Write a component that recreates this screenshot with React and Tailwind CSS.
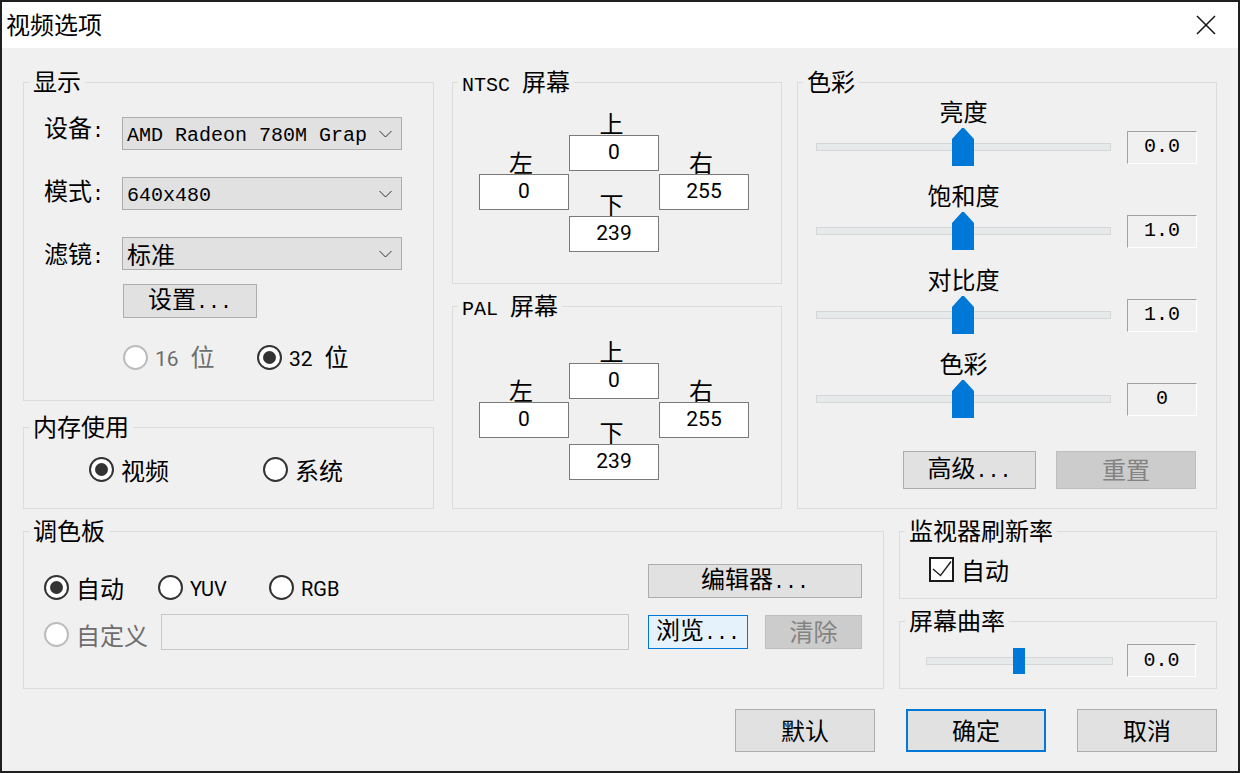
import React from "react";

const Mono = ({ children }) => (
  <span className="font-['Liberation_Mono'] text-[20px]">{children}</span>
);
const Num = ({ children }) => (
  <span className="font-['Roboto'] text-[21px]">{children}</span>
);

function Group({ title, className, children }) {
  return (
    <div className={"relative border border-[#dcdcdc] " + className}>
      <div className="absolute left-[5px] -top-[14px] h-[24px] leading-[24px] px-[4px] bg-[#f0f0f0] whitespace-nowrap">
        {title}
      </div>
      {children}
    </div>
  );
}

function Btn({ className, children }) {
  return (
    <div
      className={
        "flex items-center justify-center pb-[2px] leading-[24px] whitespace-nowrap " +
        className
      }
    >
      <span>{children}</span>
    </div>
  );
}

function Radio({ checked, disabled, children, className }) {
  return (
    <div className={"flex items-center h-[25px] " + (className || "")}>
      <span
        className={
          "w-[25px] h-[25px] shrink-0 rounded-full border-2 bg-white flex items-center justify-center " +
          (disabled ? "border-[#bcbcbc]" : "border-[#333333]")
        }
      >
        {checked && <span className="w-[13px] h-[13px] rounded-full bg-[#333333]" />}
      </span>
      <span
        className={
          "ml-[7px] leading-[24px] whitespace-nowrap " +
          (disabled ? "text-[#6d6d6d]" : "text-black")
        }
      >
        {children}
      </span>
    </div>
  );
}

function Chevron() {
  return (
    <svg width="13" height="8" viewBox="0 0 13 8">
      <path d="M0.5 1 L6.5 7 L12.5 1" fill="none" stroke="#333" strokeWidth="1" />
    </svg>
  );
}

function Combo({ children }) {
  return (
    <div className="w-[280px] h-[33px] border border-[#adadad] bg-[#e1e1e1] flex items-center justify-between pl-[4px] pr-[9px] leading-[24px] whitespace-nowrap">
      <span>{children}</span>
      <Chevron />
    </div>
  );
}

function EditBox({ children }) {
  return (
    <div className="w-[90px] h-[36px] border border-[#7a7a7a] bg-white flex items-center justify-center pb-[2px] font-['Roboto'] text-[21px] leading-[24px]">
      {children}
    </div>
  );
}

function ValueBox({ children, className }) {
  return (
    <div
      className={
        "h-[33px] border border-t-[#a0a0a0] border-l-[#a0a0a0] border-r-white border-b-white flex items-center justify-center font-['Liberation_Mono'] text-[20px] leading-[24px] " +
        className
      }
    >
      {children}
    </div>
  );
}

function Thumb() {
  return (
    <svg className="absolute left-[136px] top-0" width="22" height="38" viewBox="0 0 22 38">
      <polygon points="0,11 10,0 12,0 22,11 22,38 0,38" fill="#0078d7" />
    </svg>
  );
}

function ColorRow({ label, value, first }) {
  return (
    <div className={first ? "" : "mt-[17px]"}>
      <div className="ml-[18px] w-[295px] h-[24px] leading-[24px] text-center">{label}</div>
      <div className="flex items-center ml-[18px] mt-[5px]">
        <div className="relative w-[295px] h-[38px] flex items-center">
          <div className="w-full h-[8px] border border-[#d6d6d6] bg-[#e7eaea]" />
          <Thumb />
        </div>
        <ValueBox className="ml-[16px] w-[70px]">{value}</ValueBox>
      </div>
    </div>
  );
}

function Screen({ title, className, padTop }) {
  return (
    <Group title={title} className={className}>
      <div className={"flex pl-[26px] " + padTop}>
        <div className="flex flex-col w-[90px] mt-[39px]">
          <div className="h-[24px] leading-[24px] text-center pr-[6px]">左</div>
          <EditBox>0</EditBox>
        </div>
        <div className="flex flex-col w-[90px]">
          <div className="h-[24px] leading-[24px] text-center pr-[5px]">上</div>
          <EditBox>0</EditBox>
          <div className="mt-[20px] h-[25px] leading-[25px] text-center pr-[5px]">下</div>
          <EditBox>239</EditBox>
        </div>
        <div className="flex flex-col w-[90px] mt-[39px]">
          <div className="h-[24px] leading-[24px] text-center pr-[6px]">右</div>
          <EditBox>255</EditBox>
        </div>
      </div>
    </Group>
  );
}

export default function App() {
  return (
    <div className="w-[1240px] h-[773px] border-2 border-[#202020] bg-[#f0f0f0] flex flex-col font-['Noto_Sans_CJK_SC'] text-[24px] text-black overflow-hidden">
      {/* Title bar */}
      <div className="h-[46px] bg-white flex items-center justify-between pl-[4px] pr-[22px] shrink-0">
        <div className="leading-[24px] pb-[3px]">视频选项</div>
        <svg width="20" height="20" viewBox="0 0 20 20">
          <path d="M1 1 L19 19 M19 1 L1 19" stroke="#111" strokeWidth="1.5" fill="none" />
        </svg>
      </div>

      {/* Body */}
      <div className="flex flex-col pt-[34px] pl-[21px] pr-[21px]">
        {/* Row 1 */}
        <div className="flex h-[427px]">
          {/* Left column */}
          <div className="flex flex-col w-[411px]">
            <Group title="显示" className="h-[319px]">
              <div className="flex flex-col pt-[34px]">
                <div className="flex items-center h-[33px]">
                  <div className="w-[98px] pl-[20px] pb-[9px] leading-[24px] whitespace-nowrap">
                    设备<Mono>:</Mono>
                  </div>
                  <Combo>
                    <Mono>AMD Radeon 780M Grap</Mono>
                  </Combo>
                </div>
                <div className="flex items-center h-[33px] mt-[27px]">
                  <div className="w-[98px] pl-[20px] pb-[3px] leading-[24px] whitespace-nowrap">
                    模式<Mono>:</Mono>
                  </div>
                  <Combo>
                    <Mono>640x480</Mono>
                  </Combo>
                </div>
                <div className="flex items-center h-[33px] mt-[27px]">
                  <div className="w-[98px] pl-[20px] pt-[3px] leading-[24px] whitespace-nowrap">
                    滤镜<Mono>:</Mono>
                  </div>
                  <Combo>标准</Combo>
                </div>
                <Btn className="ml-[99px] mt-[14px] w-[134px] h-[34px] border border-[#adadad] bg-[#e1e1e1]">
                  设置<Mono>...</Mono>
                </Btn>
                <div className="flex items-center ml-[99px] mt-[27px]">
                  <Radio disabled className="w-[134px]">
                    <Num>16</Num>
                    <span className="ml-[12px]">位</span>
                  </Radio>
                  <Radio checked>
                    <Num>32</Num>
                    <span className="ml-[12px]">位</span>
                  </Radio>
                </div>
              </div>
            </Group>
            <Group title="内存使用" className="h-[82px] mt-[26px]">
              <div className="flex items-center ml-[65px] mt-[29px]">
                <Radio checked className="w-[174px]">视频</Radio>
                <Radio>系统</Radio>
              </div>
            </Group>
          </div>

          {/* Middle column */}
          <div className="flex flex-col w-[330px] ml-[18px]">
            <Screen
              title={
                <>
                  <Mono>NTSC </Mono>屏幕
                </>
              }
              className="h-[202px]"
              padTop="pt-[28px]"
            />
            <Screen
              title={
                <>
                  <Mono>PAL </Mono>屏幕
                </>
              }
              className="h-[203px] mt-[22px]"
              padTop="pt-[32px]"
            />
          </div>

          {/* Right column */}
          <Group title="色彩" className="w-[420px] h-[427px] ml-[15px]">
            <div className="flex flex-col pt-[16px]">
              <ColorRow first label="亮度" value="0.0" />
              <ColorRow label="饱和度" value="1.0" />
              <ColorRow label="对比度" value="1.0" />
              <ColorRow label="色彩" value="0" />
              <div className="flex ml-[105px] mt-[33px]">
                <Btn className="w-[133px] h-[38px] border border-[#adadad] bg-[#e1e1e1]">
                  高级<Mono>...</Mono>
                </Btn>
                <Btn className="ml-[20px] w-[140px] h-[38px] border border-[#bfbfbf] bg-[#cccccc] text-[#838383]">
                  重置
                </Btn>
              </div>
            </div>
          </Group>
        </div>

        {/* Row 2 */}
        <div className="flex h-[158px] mt-[22px]">
          <Group title="调色板" className="w-[861px] h-[158px]">
            <div className="flex">
              <div className="flex flex-col w-[605px] pl-[20px]">
                <div className="flex items-center mt-[43px]">
                  <Radio checked className="w-[114px]">自动</Radio>
                  <Radio className="w-[111px]">
                    <span className="font-['Roboto'] text-[20px]">YUV</span>
                  </Radio>
                  <Radio>
                    <span className="font-['Roboto'] text-[20px]">RGB</span>
                  </Radio>
                </div>
                <div className="flex items-start mt-[14px]">
                  <Radio disabled className="w-[117px] mt-[8px]">自定义</Radio>
                  <div className="w-[468px] h-[36px] border border-[#c8c8c8] bg-[#f0f0f0]" />
                </div>
              </div>
              <div className="flex flex-col ml-[19px] mt-[32px]">
                <Btn className="w-[214px] h-[34px] border border-[#adadad] bg-[#e1e1e1]">
                  编辑器<Mono>...</Mono>
                </Btn>
                <div className="flex mt-[17px]">
                  <Btn className="w-[100px] h-[34px] border border-[#0078d7] bg-[#e5f1fb]">
                    浏览<Mono>...</Mono>
                  </Btn>
                  <Btn className="ml-[17px] w-[97px] h-[34px] border border-[#bfbfbf] bg-[#cccccc] text-[#838383]">
                    清除
                  </Btn>
                </div>
              </div>
            </div>
          </Group>

          <div className="flex flex-col w-[318px] ml-[15px]">
            <Group title="监视器刷新率" className="h-[68px]">
              <div className="flex items-center ml-[29px] mt-[25px]">
                <div className="w-[25px] h-[25px] border-2 border-[#1a1a1a] bg-white">
                  <svg width="21" height="21" viewBox="0 0 21 21">
                    <path d="M2 10 L9.5 16.5 L20 2.5" fill="none" stroke="#222" strokeWidth="1.4" />
                  </svg>
                </div>
                <span className="ml-[7px] leading-[24px]">自动</span>
              </div>
            </Group>
            <Group title="屏幕曲率" className="h-[68px] mt-[22px]">
              <div className="flex items-center ml-[26px] mt-[22px] h-[33px]">
                <div className="relative w-[187px] h-[26px] flex items-center">
                  <div className="w-full h-[8px] border border-[#d6d6d6] bg-[#e7eaea]" />
                  <div className="absolute left-[87px] top-0 w-[12px] h-[26px] bg-[#0078d7]" />
                </div>
                <ValueBox className="ml-[14px] w-[69px]">0.0</ValueBox>
              </div>
            </Group>
          </div>
        </div>

        {/* Row 3: buttons */}
        <div className="flex justify-end mt-[20px]">
          <Btn className="w-[140px] h-[43px] border border-[#adadad] bg-[#e1e1e1]">默认</Btn>
          <Btn className="ml-[31px] w-[140px] h-[43px] border-2 border-[#0078d7] bg-[#e1e1e1]">确定</Btn>
          <Btn className="ml-[31px] w-[140px] h-[43px] border border-[#adadad] bg-[#e1e1e1]">取消</Btn>
        </div>
      </div>
    </div>
  );
}
